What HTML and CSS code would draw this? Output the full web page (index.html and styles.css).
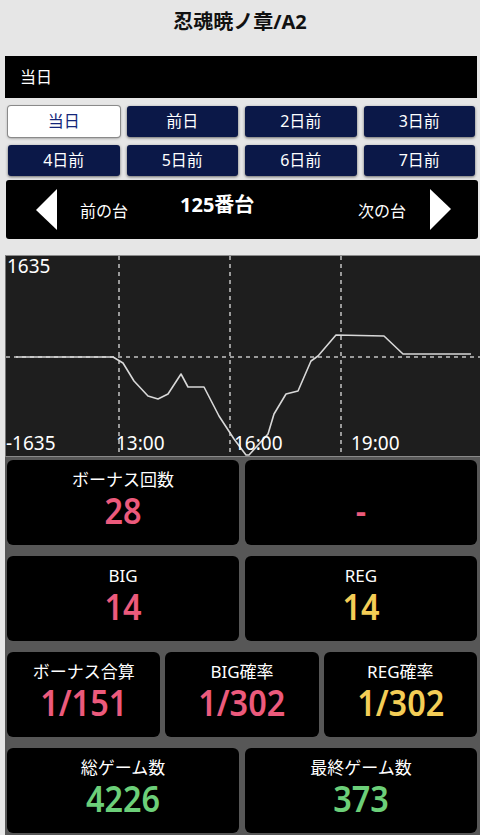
FILE: index.html
```html
<!doctype html>
<html>
	<head>
	<meta charset="utf-8">
	<link rel="stylesheet" href="styles.css">
	</head>
	<body>
	<h1 class="title">忍魂暁ノ章/A2</h1>
	<div class="daybar">当日</div>

	<div class="days">
		<div class="day on">当日</div>
		<div class="day">前日</div>
		<div class="day">2日前</div>
		<div class="day">3日前</div>
		<div class="day">4日前</div>
		<div class="day">5日前</div>
		<div class="day">6日前</div>
		<div class="day">7日前</div>
	</div>

	<div class="nav">
		<svg class="arrow" width="21" height="41" viewBox="0 0 21 41"><polygon points="21,0 21,41 0,21" fill="#fff"/></svg>
		<span class="prev">前の台</span>
		<span class="no">125番台</span>
		<span class="next">次の台</span>
		<svg class="arrow" width="21" height="41" viewBox="0 0 21 41"><polygon points="0,0 21,20 0,41" fill="#fff"/></svg>
	</div>

	<div class="chart">
		<svg width="475" height="200" viewBox="0 0 475 200">
			<g stroke="#9a9a9a" stroke-width="2" stroke-dasharray="4 4">
				<line x1="113" y1="0" x2="113" y2="200"/>
				<line x1="224" y1="0" x2="224" y2="200"/>
				<line x1="335" y1="0" x2="335" y2="200"/>
				<line x1="0" y1="101" x2="475" y2="101"/>
			</g>
			<polyline fill="none" stroke="#d8d8d8" stroke-width="1.6" stroke-linejoin="round"
				points="10,101 107,101 117,107 128,125 142,140 152,143 162,138 175,118 182,131 198,131 213,160 228,183 240,199 243,199 262,178 268,158 280,138 292,135 305,105 312,100 330,79 378,80 397,98 465,98"/>
			<g class="lbl">
				<text x="1" y="17">1635</text>
				<text x="0" y="194">-1635</text>
				<text x="110" y="194">13:00</text>
				<text x="228" y="194">16:00</text>
				<text x="345" y="194">19:00</text>
			</g>
		</svg>
	</div>

	<div class="stats">
		<div class="row two">
			<div class="card"><div class="lab">ボーナス回数</div><div class="val pink">28</div></div>
			<div class="card"><div class="lab">&nbsp;</div><div class="val pink">-</div></div>
		</div>
		<div class="row two">
			<div class="card"><div class="lab">BIG</div><div class="val pink">14</div></div>
			<div class="card"><div class="lab">REG</div><div class="val yellow">14</div></div>
		</div>
		<div class="row three">
			<div class="card"><div class="lab">ボーナス合算</div><div class="val pink">1/151</div></div>
			<div class="card"><div class="lab">BIG確率</div><div class="val pink">1/302</div></div>
			<div class="card"><div class="lab">REG確率</div><div class="val yellow">1/302</div></div>
		</div>
		<div class="row two">
			<div class="card"><div class="lab">総ゲーム数</div><div class="val green">4226</div></div>
			<div class="card"><div class="lab">最終ゲーム数</div><div class="val green">373</div></div>
		</div>
	</div>
	</body>
</html>
```

FILE: styles.css
```css
body{
	margin:0;
	width:480px;
	background:#e6e6e6;
	font-family:"Noto Sans","Noto Sans CJK JP",sans-serif;
}
.title{
	margin:0;
	height:56px;
	padding-top:9px;
	box-sizing:border-box;
	font-size:20px;
	line-height:26px;
	text-align:center;
	color:#111;
}
.daybar{
	margin:0 3px 0 5px;
	height:42px;
	line-height:42px;
	padding-left:15px;
	background:#000;
	color:#fff;
	font-size:16px;
}
.days{
	display:grid;
	grid-template-columns:repeat(4,1fr);
	column-gap:7px;
	row-gap:8px;
	margin:8px 5px 0 8px;
}
.day{
	height:31px;
	line-height:31px;
	text-align:center;
	font-size:16px;
	color:#fff;
	background:#0b1848;
	border-radius:3px;
	box-shadow:0 1px 3px rgba(0,0,0,.55);
}
.day.on{
	background:#fff;
	color:#14267a;
	box-shadow:0 0 0 1px #8a8a8a,0 1px 3px rgba(0,0,0,.5);
}
.nav{
	display:flex;
	align-items:center;
	margin:4px 2px 0 6px;
	height:59px;
	padding:0 27px 0 30px;
	background:#000;
	border-radius:3px;
	color:#fff;
	font-size:16px;
}
.prev{
	margin-left:23px;
}
.no{
	margin-left:52px;
	font-size:20px;
	font-weight:bold;
	margin-top:-13px;
}
.next{
	margin-left:auto;
	margin-right:24px;
}
.chart{
	margin:16px 0 0 5px;
	height:200px;
	background:#1e1e1e;
	border-top:1px solid #8a8a8a;
	border-bottom:1px solid #8a8a8a;
	border-left:1px solid #777;
	overflow:hidden;
}
.chart svg{
	display:block;
}
.lbl text{
	fill:#fff;
	font-size:19px;
	font-family:"Noto Sans",sans-serif;
}
.stats{
	margin-left:5px;
	height:378px;
	box-sizing:border-box;
	padding:3px 3px 2px 2px;
	background:#575757;
	display:flex;
	flex-direction:column;
	gap:11px;
}
.row{
	display:grid;
	height:85px;
}
.row.two{
	grid-template-columns:1fr 1fr;
	column-gap:6px;
}
.row.three{
	grid-template-columns:1fr 1fr 1fr;
	column-gap:5px;
}
.card{
	background:#000;
	border-radius:6px;
	text-align:center;
	padding-top:9px;
}
.lab{
	color:#fff;
	font-size:17px;
	line-height:22px;
}
.val{
	font-size:36px;
	font-weight:600;
	line-height:40px;
	transform:scaleX(.9);
}
.pink{
	color:#ec5a7c;
}
.yellow{
	color:#f4cd56;
}
.green{
	color:#6ccf79;
}
```
